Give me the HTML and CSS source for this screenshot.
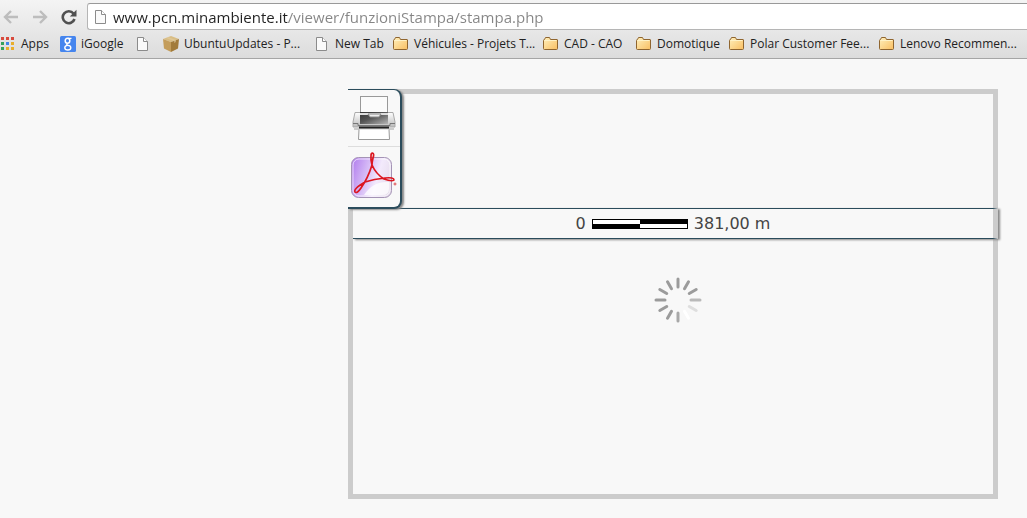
FILE: index.html
```html
<!DOCTYPE html>
<html lang="it">
<head>
<meta charset="utf-8">
<title>Stampa</title>
<link rel="stylesheet" href="styles.css">
</head>

<body>
<!-- shapes used more than once -->
<svg class="defs" aria-hidden="true">
  <defs>
    <linearGradient id="gfolder" x1="0" y1="0" x2="1" y2="1">
      <stop offset="0" stop-color="#fff0bd"/><stop offset="1" stop-color="#f9bf62"/>
    </linearGradient>
    <symbol id="folder" viewBox="0 0 16 16">
      <path d="M1.5 3.5 L2.5 1.5 H6.5 L7.5 3.5 H14 Q14.5 3.5 14.5 4 V12.5 Q14.5 13.5 13.5 13.5 H1.5 Q.5 13.5 .5 12.5 V4.5 Q.5 3.5 1.5 3.5 Z" fill="url(#gfolder)" stroke="#8f652f"/>
      <path d="M1.5 4.5 H13.5" stroke="#fff3c8"/>
    </symbol>
    <symbol id="page" viewBox="0 0 16 16">
      <path d="M2.5 1.5 H8.5 L12.5 5.5 V14.5 H2.5 Z" fill="#fafafa" stroke="#8b8b8b"/>
      <path d="M8.5 1.5 V5.5 H12.5" fill="#fff" stroke="#8b8b8b"/>
    </symbol>
  </defs>
</svg>

<header class="browser">
  <div class="toolbar">
    <button class="nav" type="button" aria-label="Back"><svg width="16" height="14" viewBox="0 0 16 14"><path d="M8 1 L2 7 L8 13 M2 7 H15" fill="none" stroke="#bdbdbd" stroke-width="2.4"/></svg></button>
    <button class="nav" type="button" aria-label="Forward"><svg width="16" height="14" viewBox="0 0 16 14"><path d="M8 1 L14 7 L8 13 M14 7 H1" fill="none" stroke="#bdbdbd" stroke-width="2.4"/></svg></button>
    <button class="nav" type="button" aria-label="Reload"><svg width="16" height="16" viewBox="0 0 16 16"><path d="M12.5 4.5 A6 6 0 1 0 13.5 10" fill="none" stroke="#505050" stroke-width="2.6"/><path d="M15.5 .8 V7.5 H8.8 Z" fill="#505050"/></svg></button>
    <div class="address">
      <svg class="icon" width="16" height="16"><use href="#page"/></svg>
      <input class="url" type="text" aria-label="Address" value="www.pcn.minambiente.it/viewer/funzioniStampa/stampa.php">
    </div>
  </div>
  <nav class="bookmarks">
    <a href="#"><svg class="icon" width="16" height="16" viewBox="0 0 16 16">
      <path d="M1 1h3v3H1z M6 1h3v3H6z M11 1h3v3h-3z" fill="#d84a3d"/>
      <path d="M1 6h3v3H1z M1 11h3v3H1z" fill="#35a15c"/><path d="M6 6h3v3H6z" fill="#4285e8"/>
      <path d="M11 6h3v3h-3z M6 11h3v3H6z M11 11h3v3h-3z" fill="#e9ae2c"/></svg>Apps</a>
    <a href="#"><svg class="icon" width="16" height="16" viewBox="0 0 16 16">
      <rect width="16" height="16" rx="1.5" fill="#4585ee"/>
      <g fill="none" stroke="#fff"><ellipse cx="7.5" cy="4.8" rx="2.3" ry="2.5" stroke-width="1.5"/><path d="M8 2.3 H11.5 M7 7.5 Q6 8.7 8 9.2" stroke-width="1.3"/><ellipse cx="7.8" cy="11.7" rx="3" ry="2.3" stroke-width="1.4"/></g></svg>iGoogle</a>
    <a href="#" aria-label="Page"><svg class="icon" width="16" height="16"><use href="#page"/></svg></a>
    <a href="#"><svg class="icon" width="16" height="16" viewBox="0 0 16 16">
      <path d="M0 3 L8 0 L16 3 L8 6 Z" fill="#d9bd84"/><path d="M0 3 L8 6 V16 L1 12.5 Z" fill="#c49d5b"/><path d="M16 3 L8 6 V16 L15 12.5 Z" fill="#a27b3a"/><path d="M3 2 L11 5 V7 L13 6 V4 L5 1 Z" fill="#e6d2a6" opacity=".5"/></svg>UbuntuUpdates - P...</a>
    <a href="#"><svg class="icon" width="16" height="16"><use href="#page"/></svg>New Tab</a>
    <a href="#"><svg class="icon" width="16" height="16"><use href="#folder"/></svg>Véhicules - Projets T...</a>
    <a href="#"><svg class="icon" width="16" height="16"><use href="#folder"/></svg>CAD - CAO</a>
    <a href="#"><svg class="icon" width="16" height="16"><use href="#folder"/></svg>Domotique</a>
    <a href="#"><svg class="icon" width="16" height="16"><use href="#folder"/></svg>Polar Customer Fee...</a>
    <a href="#"><svg class="icon" width="16" height="16"><use href="#folder"/></svg>Lenovo Recommen...</a>
  </nav>
</header>

<main class="sheet">
  <div class="tools">
    <button type="button" aria-label="Stampa">
      <svg width="44" height="46" viewBox="0 0 44 46">
        <defs>
          <linearGradient id="gbody" x1="0" y1="0" x2="1" y2="1"><stop offset="0" stop-color="#333"/><stop offset=".45" stop-color="#555"/><stop offset="1" stop-color="#b5b5b5"/></linearGradient>
          <linearGradient id="gside" x1="0" y1="0" x2="0" y2="1"><stop offset="0" stop-color="#fff"/><stop offset="1" stop-color="#bbb"/></linearGradient>
        </defs>
        <path d="M2 33 H42 V35 H2 Z" fill="#ccc"/>
        <rect x="8.5" y="1.5" width="27" height="17" fill="#fbfbfb" stroke="#999"/>
        <path d="M3 17.5 H41 L43 27 V32 H1 V27 Z" fill="url(#gside)" stroke="#aaa"/>
        <path d="M8 17 H36 V29 H8 Z" fill="url(#gbody)"/>
        <path d="M8 18 H36 V20 H8 Z" fill="#ddd"/>
        <path d="M16 19 H29 L27 22 H18 Z" fill="#eee" stroke="#888"/>
        <path d="M1 28.5 H6 V30.5 H38 V28.5 H43" fill="none" stroke="#777"/>
        <path d="M7 32.5 H37" stroke="#222" stroke-width="2"/>
        <path d="M7 34.5 L6.5 44.5 H37.5 L37 34.5" fill="#fff" stroke="#999"/>
      </svg>
    </button>
    <button type="button" aria-label="PDF">
      <svg width="48" height="48" viewBox="0 0 48 48">
        <defs>
          <linearGradient id="gpdf" x1="0" y1=".3" x2="1" y2=".6"><stop offset="0" stop-color="#b685ee"/><stop offset=".35" stop-color="#d5b9f6"/><stop offset=".65" stop-color="#f3eafc"/><stop offset="1" stop-color="#e6dcec"/></linearGradient>
        </defs>
        <rect x="1.5" y="5.5" width="40" height="40" rx="7" fill="url(#gpdf)" stroke="#a493b5"/>
        <rect x="3" y="7" width="37" height="37" rx="6" fill="none" stroke="#fff" opacity=".65"/>
        <path d="M14 43 Q23 29 39 30 V37 Q39 43 32 43 Z" fill="#fff" opacity=".75"/>
        <path d="M21 4 Q21 1 22.5 1 Q24.5 1.5 23 6 Q22 10 22 13 Q26 22 34 27 Q42 30 44 28 Q44 25 35 26 Q24 27 15 30 M22 13 Q18 26 11 36 Q7 42 5 40 Q3 37 15 30 M22 13 Q20.5 8 21 4" fill="none" stroke="#dc1721" stroke-width="1.7"/>
        <circle cx="45" cy="32" r="1" fill="none" stroke="#dc4b50"/>
      </svg>
    </button>
  </div>
  <div class="scale">
    <span>0</span>
    <div class="ruler"><i></i><i></i><i></i><i></i></div>
    <span>381,00 m</span>
  </div>
  <div class="map">
    <svg width="50" height="50" viewBox="-25 -25 50 50" fill="none" stroke="#9b9b9b" stroke-width="3" stroke-linecap="round" role="img" aria-label="Loading">
      <path d="M0 -13 V-21"/>
      <path d="M0 -13 V-21" transform="rotate(30)"/>
      <path d="M0 -13 V-21" transform="rotate(60)"/>
      <path d="M13 0 H22" stroke="#b9b9b9"/>
      <path d="M0 -13 V-21" transform="rotate(120)" stroke="#dedede"/>
      <path d="M0 -13 V-21" transform="rotate(150)" stroke="#fff"/>
      <path d="M0 13 V21" stroke="#a8a8a8"/>
      <path d="M0 -13 V-21" transform="rotate(210)"/>
      <path d="M0 -13 V-21" transform="rotate(240)"/>
      <path d="M-13 0 H-22"/>
      <path d="M0 -13 V-21" transform="rotate(300)"/>
      <path d="M0 -13 V-21" transform="rotate(330)"/>
    </svg>
  </div>
</main>
</body>
</html>
```

FILE: styles.css
```css
body {
  margin:0;
  background:#f8f8f8;
  font-family:"Open Sans", "Noto Sans", sans-serif;
}
.defs {
  position:absolute;
  width:0;
  height:0;
}
.icon { flex:none; }

/* browser bars */
.browser {
  padding-top:3px;
  background:linear-gradient(#f4f4f4, #dcdcdc);
  border-bottom:1px solid #a5a5a5;
}
.toolbar {
  display:flex;
  align-items:center;
}
.nav {
  display:flex;
  justify-content:center;
  width:29px;
  padding:0 8px 0 0;
  border:0;
  background:none;
}
.address {
  display:flex;
  flex:1;
  align-items:center;
  gap:4px;
  height:25px;
  padding-left:5px;
  border:1px solid #b5b5b5;
  border-top-color:#999;
  border-right:0;
  border-radius:3px 0 0 3px;
  background:#fff;
}
/* host part dark, path grey */
.url {
  flex:1;
  padding:0;
  border:0;
  outline:0;
  font:15px "Open Sans", "Noto Sans", sans-serif;
  color:transparent;
  background:linear-gradient(to right, #222 175px, #858585 175px);
  -webkit-background-clip:text;
  background-clip:text;
}
.bookmarks {
  display:grid;
  grid-template-columns:60px 75px 28px 151px 79px 150px 93px 93px 150px 1fr;
  align-items:center;
  height:28px;
}
.bookmarks a {
  display:flex;
  align-items:center;
  gap:5px;
  font-size:12px;
  line-height:16px;
  white-space:nowrap;
  color:#222;
  text-decoration:none;
}

/* print sheet */
.sheet {
  position:relative;
  margin:30px 29px 19px 348px;
  padding-top:114px;
  border:5px solid #ccc;
}
.tools {
  position:absolute;
  top:-5px;
  left:-5px;
  padding-bottom:2px;
  border:1px solid #2b4c5c;
  border-width:1px 2px 2px 0;
  border-radius:0 8px 8px 0;
  background:#f8f8f8;
  box-shadow:2px 1px 2px #888;
}
.tools button {
  display:flex;
  align-items:center;
  justify-content:center;
  width:52px;
  height:56px;
  padding:0;
  border:0;
  background:none;
}
.tools button + button {
  height:59px;
  border-top:1px solid #ddd;
}
/* runs under the right edge of the sheet, only its shadow sticks out */
.scale {
  display:flex;
  align-items:center;
  justify-content:center;
  gap:6px;
  height:29px;
  margin-right:-5px;
  border:1px solid #2b4c5c;
  border-width:1px 0;
  border-right:5px solid #ccc;
  box-shadow:2px 1px 2px #888;
  font:16px "DejaVu Sans", sans-serif;
  color:#444;
}
.ruler {
  display:grid;
  grid-template-columns:1fr 1fr;
  width:94px;
  height:8px;
  border:1px solid #000;
  background:#fff;
}
.ruler i:nth-child(2), .ruler i:nth-child(3) { background:#000; }
.map {
  display:flex;
  justify-content:center;
  padding:36px 0 169px 10px;
}
```
